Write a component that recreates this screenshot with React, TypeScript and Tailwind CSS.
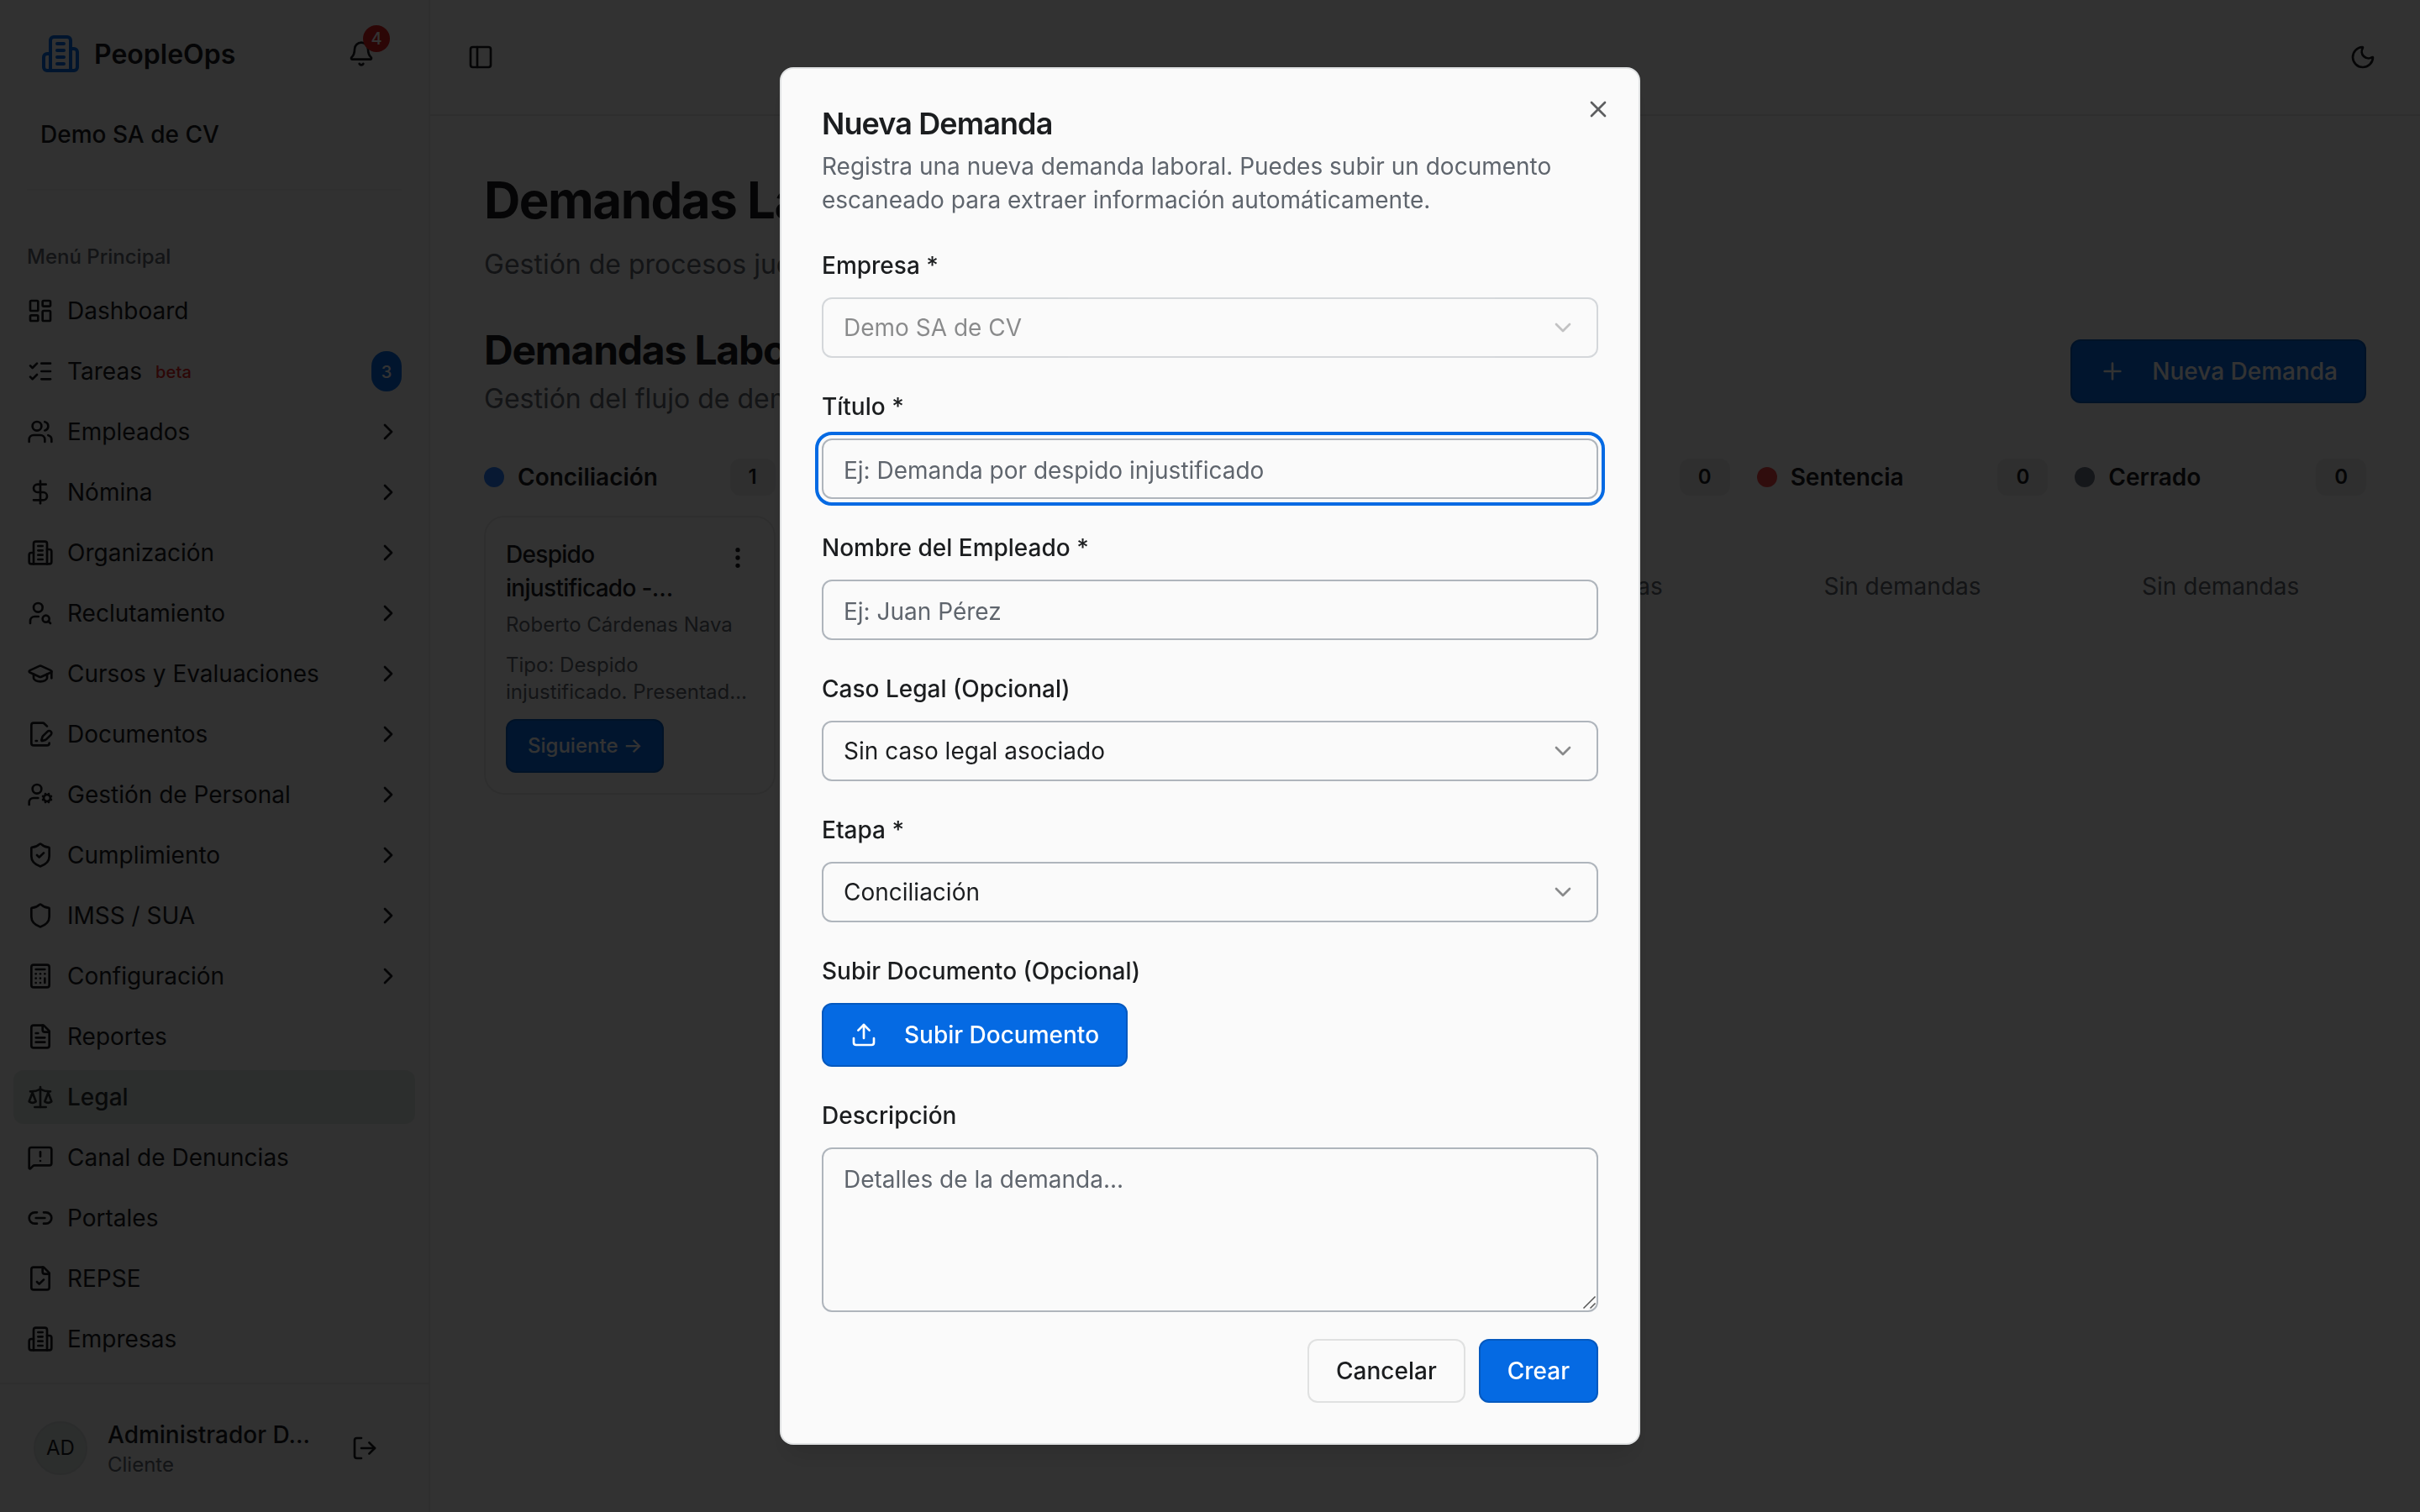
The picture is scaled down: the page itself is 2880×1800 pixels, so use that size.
import type { ReactNode } from "react";
import { useState } from "react";
import {
  Bell,
  Calculator,
  ChevronDown,
  ChevronRight,
  DollarSign,
  EllipsisVertical,
  GraduationCap,
  LayoutDashboard,
  Link2,
  ListChecks,
  LogOut,
  MessageSquareWarning,
  Moon,
  PanelLeft,
  Plus,
  Scale,
  Shield,
  ShieldCheck,
  Upload,
  UserCog,
  UserSearch,
  Users,
  X,
} from "lucide-react";
import clsx from "clsx";

type IconProps = { className?: string };

function Svg({ className, children }: IconProps & { children: ReactNode }) {
  return (
    <svg
      className={className}
      viewBox="0 0 24 24"
      fill="none"
      stroke="currentColor"
      strokeWidth={2}
      strokeLinecap="round"
      strokeLinejoin="round"
    >
      {children}
    </svg>
  );
}

function Building({ className }: IconProps) {
  return (
    <Svg className={className}>
      <path d="M6 22V4a2 2 0 0 1 2-2h8a2 2 0 0 1 2 2v18Z" />
      <path d="M6 12H4a2 2 0 0 0-2 2v6a2 2 0 0 0 2 2h2" />
      <path d="M18 9h2a2 2 0 0 1 2 2v9a2 2 0 0 1-2 2h-2" />
      <path d="M10 6h4M10 10h4M10 14h4M10 18h4" />
    </Svg>
  );
}

function FileText({ className }: IconProps) {
  return (
    <Svg className={className}>
      <path d="M15 2H6a2 2 0 0 0-2 2v16a2 2 0 0 0 2 2h12a2 2 0 0 0 2-2V7Z" />
      <path d="M14 2v4a2 2 0 0 0 2 2h4M10 9H8M16 13H8M16 17H8" />
    </Svg>
  );
}

function FileCheck({ className }: IconProps) {
  return (
    <Svg className={className}>
      <path d="M15 2H6a2 2 0 0 0-2 2v16a2 2 0 0 0 2 2h12a2 2 0 0 0 2-2V7Z" />
      <path d="M14 2v4a2 2 0 0 0 2 2h4" />
      <path d="m9 15 2 2 4-4" />
    </Svg>
  );
}

function FilePen({ className }: IconProps) {
  return (
    <Svg className={className}>
      <path d="m18 5-2.414-2.414A2 2 0 0 0 14.172 2H6a2 2 0 0 0-2 2v16a2 2 0 0 0 2 2h12a2 2 0 0 0 2-2" />
      <path d="M21.378 12.626a1 1 0 0 0-3.004-3.004l-4.01 4.012a2 2 0 0 0-.506.854l-.837 2.87a.5.5 0 0 0 .62.62l2.87-.837a2 2 0 0 0 .854-.506z" />
      <path d="M8 18h1" />
    </Svg>
  );
}

const menuItems = [
  { label: "Dashboard", icon: LayoutDashboard },
  { label: "Tareas", icon: ListChecks, beta: true, count: 3 },
  { label: "Empleados", icon: Users, sub: true },
  { label: "Nómina", icon: DollarSign, sub: true },
  { label: "Organización", icon: Building, sub: true },
  { label: "Reclutamiento", icon: UserSearch, sub: true },
  { label: "Cursos y Evaluaciones", icon: GraduationCap, sub: true },
  { label: "Documentos", icon: FilePen, sub: true },
  { label: "Gestión de Personal", icon: UserCog, sub: true },
  { label: "Cumplimiento", icon: ShieldCheck, sub: true },
  { label: "IMSS / SUA", icon: Shield, sub: true },
  { label: "Configuración", icon: Calculator, sub: true },
  { label: "Reportes", icon: FileText },
  { label: "Legal", icon: Scale, active: true },
  { label: "Canal de Denuncias", icon: MessageSquareWarning },
  { label: "Portales", icon: Link2 },
  { label: "REPSE", icon: FileCheck },
  { label: "Empresas", icon: Building },
];

const columns = [
  { name: "Conciliación", dot: "bg-blue-500", count: 1 },
  { name: "Demanda", dot: "bg-yellow-500", count: 0 },
  { name: "Audiencia", dot: "bg-orange-500", count: 0 },
  { name: "Pruebas", dot: "bg-purple-500", count: 0 },
  { name: "Sentencia", dot: "bg-[#ef4444]", count: 0 },
  { name: "Cerrado", dot: "bg-gray-500", count: 0 },
];

function Sidebar() {
  return (
    <aside className="flex w-[512px] shrink-0 flex-col border-r-2 border-[#e4e6e7] bg-[#f2f3f3]">
      <div className="flex h-32 items-center px-12">
        <Building className="size-12 text-[#056ae3]" />
        <span className="ml-4 pt-0.5 text-[32px] font-semibold">PeopleOps</span>
        <div className="relative ml-auto mr-4">
          <Bell className="size-8" />
          <span className="absolute -top-[18px] left-[18px] flex size-8 items-center justify-center rounded-full bg-[#dc1f1f] text-[20px] font-medium text-white">
            4
          </span>
        </div>
      </div>
      <div className="flex h-16 items-center px-12 text-[28px] font-medium">
        Demo SA de CV
      </div>
      <div className="mx-8 mt-[33px] h-0.5 bg-[#ebecec]" />
      <div className="mt-[47px] flex h-16 items-center px-8 text-[24px] font-medium text-[#5f656d]">
        Menú Principal
      </div>
      <nav className="flex flex-1 flex-col gap-2 px-4">
        {menuItems.map(({ label, icon: Icon, ...item }) => (
          <div
            key={label}
            className={clsx(
              "flex h-16 items-center gap-4 rounded-xl px-4 text-[28px]",
              item.active && "bg-[#dde3e1] font-medium text-[#2a2f30]"
            )}
          >
            <Icon className="size-8 shrink-0" />
            <span>{label}</span>
            {item.beta && (
              <span className="pt-0.5 text-[20px] font-medium tracking-[0.01em] text-[#e02424]">
                beta
              </span>
            )}
            {item.count && (
              <span className="ml-auto flex h-12 w-9 items-center justify-center rounded-full bg-[#056ae3] pt-0.5 text-[20px] font-medium text-white">
                {item.count}
              </span>
            )}
            {item.sub && <ChevronRight className="ml-auto size-8" />}
          </div>
        ))}
      </nav>
      <div className="flex h-[154px] items-center border-t-2 border-[#e5e6e6] pl-10">
        <div className="flex size-16 items-center justify-center rounded-full border-2 border-[#d5dbd9] bg-[#dde3e1] text-[24px]">
          AD
        </div>
        <div className="ml-6 w-[250px] whitespace-nowrap">
          <p className="text-[28px]/10 font-medium">Administrador D…</p>
          <p className="text-[24px]/8 text-[#5f656d]">Cliente</p>
        </div>
        <LogOut className="ml-10 size-8" />
      </div>
    </aside>
  );
}

function DemandCard() {
  return (
    <div className="rounded-3xl border-2 border-[#e5e6e6] p-6">
      <div className="flex items-start justify-between">
        <p className="w-56 text-[28px]/10 font-medium tracking-tight">
          Despido injustificado -…
        </p>
        <EllipsisVertical className="mr-[3px] mt-2 size-8" />
      </div>
      <p className="mt-2 text-[24px]/8 text-[#5f656d]">Roberto Cárdenas Nava</p>
      <p className="mt-4 whitespace-nowrap text-[24px]/8 text-[#5f656d]">
        Tipo: Despido
        <br />
        injustificado. Presentad…
      </p>
      <button className="mt-4 flex h-16 w-[188px] items-center whitespace-nowrap rounded-xl border-2 border-[#0559bf] bg-[#056ae3] px-6 text-[24px] font-medium text-white">
        Siguiente →
      </button>
    </div>
  );
}

function Board() {
  return (
    <main className="flex-1 bg-[#fafafa]">
      <header className="flex h-[138px] items-center justify-between border-b-2 border-[#e4e5e6] pl-11 pr-[52px]">
        <PanelLeft className="size-8" />
        <Moon className="size-8" />
      </header>
      <div className="px-16 pt-16">
        <h1 className="text-[60px]/[72px] font-bold tracking-tight">
          Demandas Laborales
        </h1>
        <p className="mt-[17px] text-[32px]/[48px] text-[#5f656d]">
          Gestión de procesos judiciales laborales
        </p>
        <div className="mt-[47px] flex items-center justify-between">
          <div>
            <h2 className="h-16 text-[48px]/[62px] font-bold tracking-tight">
              Demandas Laborales
            </h2>
            <p className="pt-px text-[32px]/[47px] text-[#5f656d]">
              Gestión del flujo de demandas laborales
            </p>
          </div>
          <button className="flex h-[76px] items-center gap-[31px] rounded-xl border-2 border-[#0559bf] bg-[#056ae3] px-8 text-[28px] font-medium text-white">
            <Plus className="size-8" />
            Nueva Demanda
          </button>
        </div>
        <div className="mt-12 grid grid-cols-6 gap-8">
          {columns.map((column) => (
            <section key={column.name}>
              <div className="flex h-11 items-center">
                <span className={clsx("size-6 rounded-full", column.dot)} />
                <span className="ml-4 text-[28px] font-semibold">{column.name}</span>
                <span className="ml-auto flex h-11 items-center rounded-xl bg-[#e9ebec] px-[22px] text-[24px] font-semibold">
                  {column.count}
                </span>
              </div>
              <div className="mt-6">
                {column.count > 0 ? (
                  <DemandCard />
                ) : (
                  <p className="py-16 text-center text-[28px]/10 text-[#5f656d]">
                    Sin demandas
                  </p>
                )}
              </div>
            </section>
          ))}
        </div>
      </div>
    </main>
  );
}

function Field({ label, children }: { label: string; children: ReactNode }) {
  return (
    <div>
      <label className="mb-4 flex h-12 items-center pt-1 text-[28px] font-medium">
        {label}
      </label>
      {children}
    </div>
  );
}

function SelectBox({ value, disabled }: { value: string; disabled?: boolean }) {
  return (
    <button
      type="button"
      disabled={disabled}
      className="flex h-[72px] w-full items-center justify-between rounded-xl border-2 border-[#afb5bc] px-6 text-[28px] disabled:opacity-50"
    >
      {value}
      <ChevronDown className="size-8 opacity-50" />
    </button>
  );
}

function NewDemandDialog() {
  const [form, setForm] = useState({ title: "", employee: "", description: "" });

  const handleChange = (
    e: React.ChangeEvent<HTMLInputElement | HTMLTextAreaElement>
  ) => {
    const { name, value } = e.target;
    setForm((prev) => ({ ...prev, [name]: value }));
  };

  return (
    <div className="relative w-[1024px] rounded-2xl border-2 border-[#e0e2e3] bg-[#fafafa] p-12 shadow-[0_20px_30px_-6px_rgba(0,0,0,0.1),0_8px_12px_-8px_rgba(0,0,0,0.1)]">
      <X className="absolute right-8 top-8 size-8 opacity-70" />
      <h2 className="h-9 text-[36px]/[34px] font-semibold tracking-tight">
        Nueva Demanda
      </h2>
      <p className="mt-3 text-[28px]/10 text-[#5f656d]">
        Registra una nueva demanda laboral. Puedes subir un documento
        <br />
        escaneado para extraer información automáticamente.
      </p>
      <form className="mt-8 flex flex-col gap-8">
        <Field label="Empresa *">
          <SelectBox value="Demo SA de CV" disabled />
        </Field>
        <Field label="Título *">
          <input
            name="title"
            value={form.title}
            onChange={handleChange}
            placeholder="Ej: Demanda por despido injustificado"
            className="block h-[72px] w-full rounded-xl border-2 border-[#afb5bc] px-6 pt-[3px] text-[28px] outline-4 outline-offset-4 outline-[#056ae3] placeholder:text-[#5f656d]"
          />
        </Field>
        <Field label="Nombre del Empleado *">
          <input
            name="employee"
            value={form.employee}
            onChange={handleChange}
            placeholder="Ej: Juan Pérez"
            className="block h-[72px] w-full rounded-xl border-2 border-[#afb5bc] px-6 pt-[3px] text-[28px] placeholder:text-[#5f656d]"
          />
        </Field>
        <Field label="Caso Legal (Opcional)">
          <SelectBox value="Sin caso legal asociado" />
        </Field>
        <Field label="Etapa *">
          <SelectBox value="Conciliación" />
        </Field>
        <Field label="Subir Documento (Opcional)">
          <button
            type="button"
            className="flex h-[76px] items-center gap-8 rounded-xl border-2 border-[#0559bf] bg-[#056ae3] px-8 text-[28px] font-medium text-white"
          >
            <Upload className="size-8" />
            Subir Documento
          </button>
        </Field>
        <Field label="Descripción">
          <div className="relative">
            <textarea
              name="description"
              value={form.description}
              onChange={handleChange}
              placeholder="Detalles de la demanda..."
              className="block h-[196px] w-full resize-none rounded-xl border-2 border-[#afb5bc] px-6 py-4 text-[28px]/10 placeholder:text-[#5f656d]"
            />
            <svg
              className="absolute bottom-0.5 right-0.5 size-[18px]"
              viewBox="0 0 18 18"
              stroke="#555"
              strokeWidth={1.5}
            >
              <path d="M2.5 15.5l14-14M10.5 15.5l6-6" />
            </svg>
          </div>
        </Field>
        <div className="flex justify-end gap-4">
          <button
            type="button"
            className="h-[76px] rounded-xl border-2 border-[#e0e1e1] px-8 text-[28px] font-medium"
          >
            Cancelar
          </button>
          <button
            type="button"
            className="h-[76px] rounded-xl border-2 border-[#0559bf] bg-[#056ae3] px-8 text-[28px] font-medium text-white"
          >
            Crear
          </button>
        </div>
      </form>
    </div>
  );
}

export default function App() {
  return (
    <div className="flex h-[1800px] w-[2880px] overflow-hidden font-['Inter',sans-serif] text-[#1b1d1f]">
      <Sidebar />
      <Board />
      <div className="fixed inset-0 flex items-center justify-center bg-black/80">
        <NewDemandDialog />
      </div>
    </div>
  );
}
